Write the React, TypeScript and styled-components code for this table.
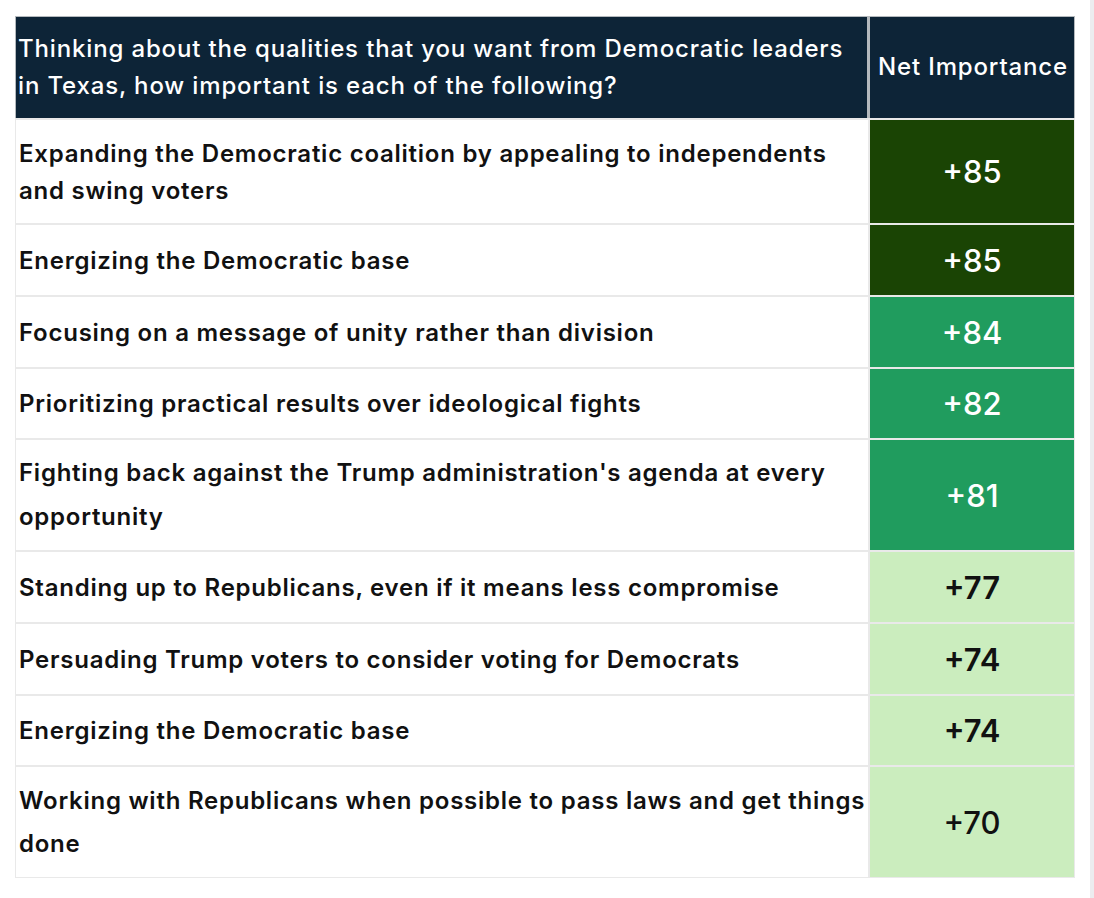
import * as React from "react";
import styled, { createGlobalStyle } from "styled-components";

const GlobalStyle = createGlobalStyle`
  html, body {
    margin: 0;
    padding: 0;
    background: #ffffff;
  }
  body {
    font-family: "Inter", "Noto Sans", sans-serif;
    color: #111111;
  }
`;

const Page = styled.div`
  width: 1094px;
  height: 898px;
  display: flex;
  align-items: flex-start;
  box-sizing: border-box;
  border-right: 4px solid #ececef;
  padding: 16px 0 0 15px;
`;

const Table = styled.div`
  width: 1060px;
  display: grid;
  grid-template-columns: 853px 205px;
  column-gap: 2px;
  row-gap: 2px;
  background: #e9e9e9;
  align-content: start;
  padding-bottom: 1px;
`;

const HeaderRow = styled.div`
  grid-column: 1 / span 2;
  display: grid;
  grid-template-columns: 851px 204px;
  column-gap: 3px;
  background: #b4b9bd;
  padding: 1px 1px 0 1px;
  height: 102px;
  box-sizing: border-box;
`;

const HeadCell = styled.div<{ $center?: boolean }>`
  background: #0d2437;
  color: #ffffff;
  font-size: 24px;
  font-weight: 500;
  letter-spacing: 0.85px;
  line-height: 37px;
  display: flex;
  align-items: center;
  justify-content: ${(p) => (p.$center ? "center" : "flex-start")};
  padding: 0 0 2px 2px;
`;

const LabelCell = styled.div<{ $h: number; $lh: number }>`
  background: #ffffff;
  height: ${(p) => p.$h}px;
  display: flex;
  align-items: center;
  padding: 0 0 0 3px;
  margin-left: 1px;
  font-size: 24px;
  font-weight: 600;
  letter-spacing: 0.75px;
  line-height: ${(p) => p.$lh}px;
  color: #111111;
`;

const ValueCell = styled.div<{ $h: number; $bg: string; $fg: string; $w: number }>`
  background: ${(p) => p.$bg};
  color: ${(p) => p.$fg};
  height: ${(p) => p.$h}px;
  display: flex;
  align-items: center;
  justify-content: center;
  font-size: 31px;
  font-weight: ${(p) => p.$w};
  margin-right: 1px;
`;

const DARK = "#1a4404";
const MID = "#209c5e";
const LIGHT = "#cbedbe";

const rows = [
  {
    label:
      "Expanding the Democratic coalition by appealing to independents and swing voters",
    value: "+85",
    h: 103,
    lh: 37,
    bg: DARK,
    fg: "#ffffff",
    w: 500,
  },
  { label: "Energizing the Democratic base", value: "+85", h: 70, lh: 37, bg: DARK, fg: "#ffffff", w: 500 },
  {
    label: "Focusing on a message of unity rather than division",
    value: "+84",
    h: 70,
    lh: 37,
    bg: MID,
    fg: "#ffffff",
    w: 500,
  },
  {
    label: "Prioritizing practical results over ideological fights",
    value: "+82",
    h: 69,
    lh: 37,
    bg: MID,
    fg: "#ffffff",
    w: 500,
  },
  {
    label:
      "Fighting back against the Trump administration's agenda at every opportunity",
    value: "+81",
    h: 110,
    lh: 44,
    bg: MID,
    fg: "#ffffff",
    w: 500,
  },
  {
    label: "Standing up to Republicans, even if it means less compromise",
    value: "+77",
    h: 70,
    lh: 37,
    bg: LIGHT,
    fg: "#111111",
    w: 600,
  },
  {
    label: "Persuading Trump voters to consider voting for Democrats",
    value: "+74",
    h: 70,
    lh: 37,
    bg: LIGHT,
    fg: "#111111",
    w: 600,
  },
  { label: "Energizing the Democratic base", value: "+74", h: 69, lh: 37, bg: LIGHT, fg: "#111111", w: 600 },
  {
    label: "Working with Republicans when possible to pass laws and get things done",
    value: "+70",
    h: 110,
    lh: 43,
    bg: LIGHT,
    fg: "#111111",
    w: 500,
  },
];

export default function App() {
  return (
    <>
      <GlobalStyle />
      <Page>
        <Table>
          <HeaderRow>
            <HeadCell>
              Thinking about the qualities that you want from Democratic leaders in
              Texas, how important is each of the following?
            </HeadCell>
            <HeadCell $center>Net Importance</HeadCell>
          </HeaderRow>
          {rows.map((r, i) => (
            <React.Fragment key={i}>
              <LabelCell $h={r.h} $lh={r.lh}>
                {r.label}
              </LabelCell>
              <ValueCell $h={r.h} $bg={r.bg} $fg={r.fg} $w={r.w}>
                {r.value}
              </ValueCell>
            </React.Fragment>
          ))}
        </Table>
      </Page>
    </>
  );
}
